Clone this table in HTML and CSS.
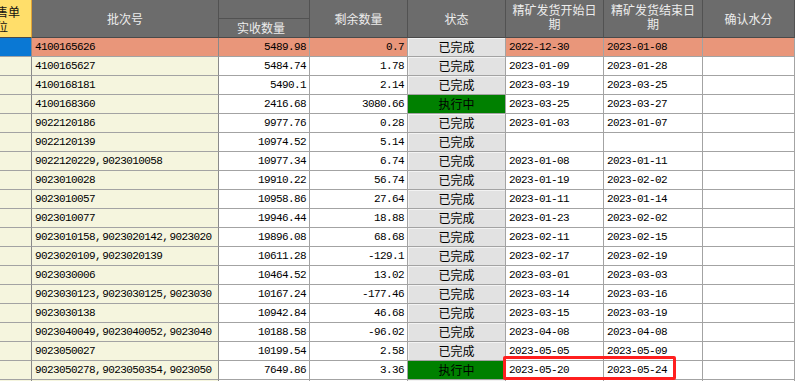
FILE: index.html
```html
<!DOCTYPE html>
<html lang="zh">
<head>
<meta charset="utf-8">
<title>批次发货</title>
<link rel="stylesheet" href="styles.css">
</head>
<body>
<div class="sheet">
  <div class="grid">
    <div class="hc hc-yellow"><div class="hc-yellow-inner">销售单位</div></div>
    <div class="hc">批次号</div>
    <div class="hc hc-split"><div class="hc-top"></div><div class="hc-bottom">实收数量</div></div>
    <div class="hc">剩余数量</div>
    <div class="hc">状态</div>
    <div class="hc hc-wrap">精矿发货开始日期</div>
    <div class="hc hc-wrap">精矿发货结束日期</div>
    <div class="hc">确认水分</div>

    <div class="c c-sel"></div><div class="c c-text c-hl">4100165626</div><div class="c c-num c-hl">5489.98</div><div class="c c-num c-hl">0.7</div><div class="c c-st">已完成</div><div class="c c-text c-hl">2022-12-30</div><div class="c c-text c-hl">2023-01-08</div><div class="c c-hl"></div>

    <div class="c c-bg"></div><div class="c c-text c-bg">4100165627</div><div class="c c-num">5484.74</div><div class="c c-num">1.78</div><div class="c c-st">已完成</div><div class="c c-text">2023-01-09</div><div class="c c-text">2023-01-28</div><div class="c"></div>

    <div class="c c-bg"></div><div class="c c-text c-bg">4100168181</div><div class="c c-num">5490.1</div><div class="c c-num">2.14</div><div class="c c-st">已完成</div><div class="c c-text">2023-03-19</div><div class="c c-text">2023-03-25</div><div class="c"></div>

    <div class="c c-bg"></div><div class="c c-text c-bg">4100168360</div><div class="c c-num">2416.68</div><div class="c c-num">3080.66</div><div class="c c-st c-run">执行中</div><div class="c c-text">2023-03-25</div><div class="c c-text">2023-03-27</div><div class="c"></div>

    <div class="c c-bg"></div><div class="c c-text c-bg">9022120186</div><div class="c c-num">9977.76</div><div class="c c-num">0.28</div><div class="c c-st">已完成</div><div class="c c-text">2023-01-03</div><div class="c c-text">2023-01-07</div><div class="c"></div>

    <div class="c c-bg"></div><div class="c c-text c-bg">9022120139</div><div class="c c-num">10974.52</div><div class="c c-num">5.14</div><div class="c c-st">已完成</div><div class="c c-text"></div><div class="c c-text"></div><div class="c"></div>

    <div class="c c-bg"></div><div class="c c-text c-bg">9022120229<span class="sep">, </span>9023010058</div><div class="c c-num">10977.34</div><div class="c c-num">6.74</div><div class="c c-st">已完成</div><div class="c c-text">2023-01-08</div><div class="c c-text">2023-01-11</div><div class="c"></div>

    <div class="c c-bg"></div><div class="c c-text c-bg">9023010028</div><div class="c c-num">19910.22</div><div class="c c-num">56.74</div><div class="c c-st">已完成</div><div class="c c-text">2023-01-19</div><div class="c c-text">2023-02-02</div><div class="c"></div>

    <div class="c c-bg"></div><div class="c c-text c-bg">9023010057</div><div class="c c-num">10958.86</div><div class="c c-num">27.64</div><div class="c c-st">已完成</div><div class="c c-text">2023-01-11</div><div class="c c-text">2023-01-14</div><div class="c"></div>

    <div class="c c-bg"></div><div class="c c-text c-bg">9023010077</div><div class="c c-num">19946.44</div><div class="c c-num">18.88</div><div class="c c-st">已完成</div><div class="c c-text">2023-01-23</div><div class="c c-text">2023-02-02</div><div class="c"></div>

    <div class="c c-bg"></div><div class="c c-text c-bg">9023010158<span class="sep">, </span>9023020142<span class="sep">, </span>9023020</div><div class="c c-num">19896.08</div><div class="c c-num">68.68</div><div class="c c-st">已完成</div><div class="c c-text">2023-02-11</div><div class="c c-text">2023-02-15</div><div class="c"></div>

    <div class="c c-bg"></div><div class="c c-text c-bg">9023020109<span class="sep">, </span>9023020139</div><div class="c c-num">10611.28</div><div class="c c-num">-129.1</div><div class="c c-st">已完成</div><div class="c c-text">2023-02-17</div><div class="c c-text">2023-02-19</div><div class="c"></div>

    <div class="c c-bg"></div><div class="c c-text c-bg">9023030006</div><div class="c c-num">10464.52</div><div class="c c-num">13.02</div><div class="c c-st">已完成</div><div class="c c-text">2023-03-01</div><div class="c c-text">2023-03-03</div><div class="c"></div>

    <div class="c c-bg"></div><div class="c c-text c-bg">9023030123<span class="sep">, </span>9023030125<span class="sep">, </span>9023030</div><div class="c c-num">10167.24</div><div class="c c-num">-177.46</div><div class="c c-st">已完成</div><div class="c c-text">2023-03-14</div><div class="c c-text">2023-03-16</div><div class="c"></div>

    <div class="c c-bg"></div><div class="c c-text c-bg">9023030138</div><div class="c c-num">10942.84</div><div class="c c-num">46.68</div><div class="c c-st">已完成</div><div class="c c-text">2023-03-15</div><div class="c c-text">2023-03-19</div><div class="c"></div>

    <div class="c c-bg"></div><div class="c c-text c-bg">9023040049<span class="sep">, </span>9023040052<span class="sep">, </span>9023040</div><div class="c c-num">10188.58</div><div class="c c-num">-96.02</div><div class="c c-st">已完成</div><div class="c c-text">2023-04-08</div><div class="c c-text">2023-04-08</div><div class="c"></div>

    <div class="c c-bg"></div><div class="c c-text c-bg">9023050027</div><div class="c c-num">10199.54</div><div class="c c-num">2.58</div><div class="c c-st">已完成</div><div class="c c-text">2023-05-05</div><div class="c c-text">2023-05-09</div><div class="c"></div>

    <div class="c c-bg"></div><div class="c c-text c-bg">9023050278<span class="sep">, </span>9023050354<span class="sep">, </span>9023050</div><div class="c c-num">7649.86</div><div class="c c-num">3.36</div><div class="c c-st c-run">执行中</div><div class="c c-text">2023-05-20</div><div class="c c-text">2023-05-24</div><div class="c"></div>

    <div class="c c-bg"></div><div class="c c-text c-bg"></div><div class="c c-num"></div><div class="c c-num"></div><div class="c c-st"></div><div class="c c-text"></div><div class="c c-text"></div><div class="c"></div>
  </div>
  <div class="mark"></div>
</div>
</body>
</html>
```

FILE: styles.css
```css
html, body {
  margin: 0;
  padding: 0;
  background: #ffffff;
}

.sheet {
  position: relative;
  width: 795px;
  height: 381px;
  overflow: hidden;
}

.grid {
  display: grid;
  grid-template-columns: 32px 187px 91px 98px 98px 98px 99px 92px;
  grid-auto-rows: 19px;
  grid-template-rows: 38px;
}

/* header cells */
.hc {
  box-sizing: border-box;
  background: #6c6c6c;
  color: #ececec;
  border-right: 1px solid #525252;
  border-bottom: 1px solid #4a4a4a;
  font-family: "Noto Sans CJK SC", "Noto Sans", sans-serif;
  font-size: 12px;
  line-height: 14px;
  display: flex;
  align-items: center;
  justify-content: center;
  text-align: center;
  overflow: hidden;
}

.hc-wrap {
  padding: 0 6px 3px;
}

.hc-yellow {
  background: #ffde6a;
  color: #111111;
  border-right: 1px solid #e0a236;
  justify-content: flex-end;
}

.hc-yellow-inner {
  flex: 0 0 58px;
  width: 58px;
  box-sizing: border-box;
  padding: 0 8px;
  line-height: 15px;
  text-align: center;
}

.hc-split {
  flex-direction: column;
  align-items: stretch;
  justify-content: flex-start;
}

.hc-top {
  height: 18px;
  border-bottom: 1px solid #525252;
}

.hc-bottom {
  flex: 1;
  display: flex;
  align-items: center;
  justify-content: center;
  padding-right: 6px;
}

/* data cells */
.c {
  box-sizing: border-box;
  background: #ffffff;
  border-right: 1px solid #a3a3a3;
  border-bottom: 1px solid #a3a3a3;
  font-family: "Liberation Mono", "Noto Sans CJK SC", monospace;
  font-size: 11px;
  letter-spacing: -0.6px;
  color: #000000;
  line-height: 18px;
  white-space: nowrap;
  overflow: hidden;
}

.c:nth-child(8n+1),
.c:nth-child(8n+2) {
  border-right-color: #8a8a8a;
}

.c-text {
  padding-left: 3px;
}

.sep {
  letter-spacing: -3.5px;
  margin-right: 1px;
}

.c-num {
  text-align: right;
  padding-right: 3px;
}

.c-bg {
  background: #f5f5de;
}

.c-sel {
  background: #0a78d4;
}

.c-hl {
  background: #e9967a;
}

.c-st {
  background: #e2e2e2;
  box-shadow: inset 1px 1px 0 #f3f3f3;
  font-family: "Noto Sans CJK SC", sans-serif;
  font-size: 12px;
  letter-spacing: 0;
  text-align: center;
}

.c-run {
  background: #008000;
  box-shadow: none;
}

/* annotation frame */
.mark {
  position: absolute;
  left: 503px;
  top: 356px;
  width: 173px;
  height: 24px;
  box-sizing: border-box;
  border: 3px solid #ff1f1f;
  border-radius: 2px;
}
```
